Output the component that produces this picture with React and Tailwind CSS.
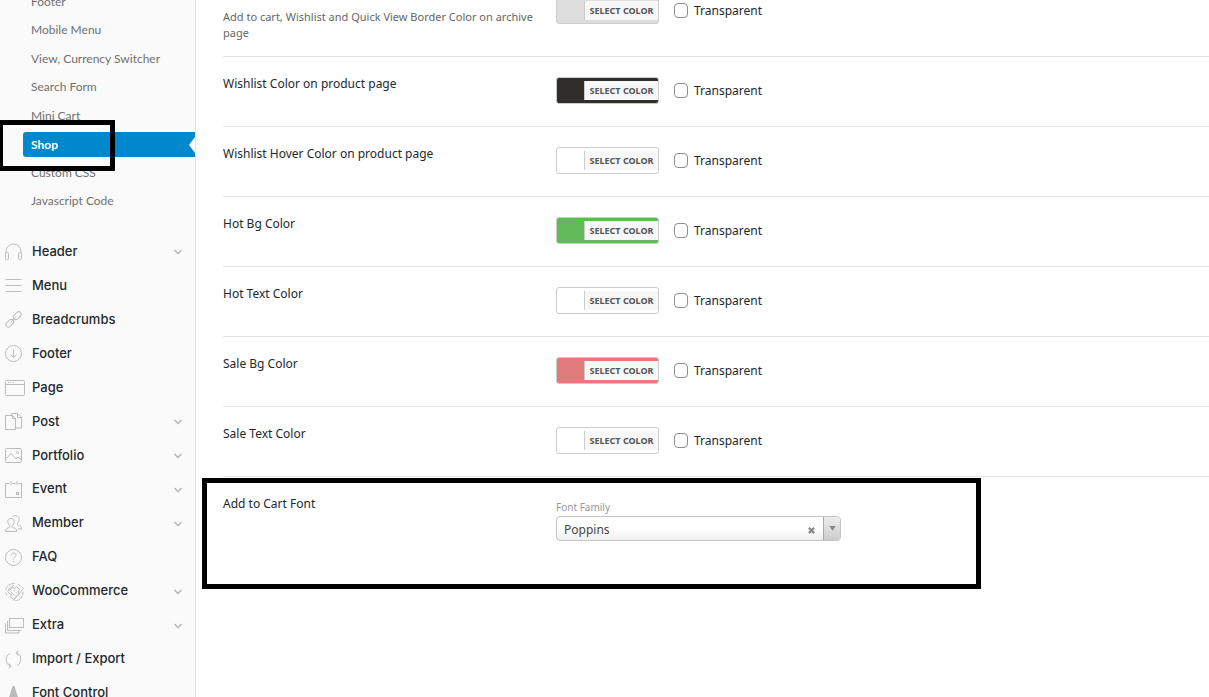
import React, { useState } from 'react';

const subItems = [
    'Footer',
    'Mobile Menu',
    'View, Currency Switcher',
    'Search Form',
    'Mini Cart',
    'Shop',
    'Custom CSS',
    'Javascript Code',
];

const icons = {
    header: (
        <>
            <path d="M1 10.500V8.500a7.500 7.500 0 0 1 15 0v2" />
            <rect x="0.500" y="9.500" width="3" height="7" rx="1" />
            <rect x="13.500" y="9.500" width="3" height="7" rx="1" />
        </>
    ),
    menu: <path d="M0.500 2.500h16M0.500 8.500h16M0.500 14.500h16" strokeWidth="1.200" />,
    breadcrumbs: (
        <>
            <rect x="-4.500" y="-2.500" width="9" height="5" rx="2.500" transform="translate(12.300 4.700) rotate(-45)" />
            <rect x="-4.500" y="-2.500" width="9" height="5" rx="2.500" transform="translate(4.700 12.300) rotate(-45)" />
            <path d="M5.500 11.500l6-6" />
        </>
    ),
    footer: (
        <>
            <circle cx="8.500" cy="8.500" r="8" />
            <path d="M8.500 4.500v8M5.500 9.500l3 3 3-3" />
        </>
    ),
    page: (
        <>
            <rect x="0.500" y="1.500" width="19" height="15" rx="1" />
            <path d="M0.500 5.500h19M3 3.500h1M5.500 3.500h1M8 3.500h1" />
        </>
    ),
    post: (
        <>
            <path d="M7.500 2.500h-7v14h10v-11zM7.500 2.500v3h3" />
            <path d="M6.500 2.500v-2h6l4 3.500v11h-6M12.500 0.500v4h4" />
        </>
    ),
    portfolio: (
        <>
            <rect x="0.500" y="1.500" width="16" height="14" rx="1" />
            <path d="M0.500 12.500l5.500-6 5 5.500 2-2 3.500 3" />
            <circle cx="12.500" cy="5.500" r="1" />
        </>
    ),
    event: (
        <>
            <path d="M4.500 2.500h-4v14h16v-14h-3M7.500 2.500h3M6 0v4M12 0v4" />
            <rect x="11.500" y="11.500" width="2" height="2" />
        </>
    ),
    member: (
        <>
            <path d="M0.500 16.500c0-3 1.500-3 4-4 .8-.4.800-1.300 0-2C3 9 2.500 7 3 5c.4-2 5.600-2 6 0 .5 2 0 4-1.500 5.500-.7.800-.7 1.600.2 2 2.600 1 4 1.200 4 4z" />
            <path d="M7 2c1-2 6.500-2 7 1.200.3 2-.2 3.600-1.400 5-.6.700-.6 1.400.2 1.800 2.400.9 3.700 1.200 3.700 4h-3.500" />
        </>
    ),
    faq: (
        <>
            <circle cx="8.500" cy="8.500" r="8" />
            <path d="M6 6.500c0-3.500 5-3.300 5-.3 0 2-2.500 2-2.500 4.300M8.500 12v1.200" />
        </>
    ),
    woo: (
        <>
            <path d="M2.500 8.500l5-4 2 1.500 2-2.500 3 3-1.500 2.500 1.500 2-6 5.500-3-3 1-2-2-1z" />
            <path d="M0.500 7.500C1.500 3 5 0.500 9.500 0.500M0.500 9.500l1.500 3M17 4l1.500 1.500L8 17.500M12.500 1l3 2M18 9c0 5-3.500 8.500-8 9M3 7l6-5" />
            <path d="M5.500 8.500l5 5M8.500 7l4 4" strokeDasharray="2 1" />
        </>
    ),
    extra: (
        <>
            <rect x="4.500" y="1.500" width="14" height="9" />
            <path d="M2.500 4v9.500h14M0.500 6.500v9.500h13.500v-2" />
        </>
    ),
    transfer: (
        <>
            <path d="M6 15.500C-.5 13 0 4.500 5 2.500M11.500 1.500c6 2.500 5.500 11 .5 13" />
            <path d="M3.500 17l2.500-1.500-2-3M13.500 0l-2.500 1.500 2 3" />
        </>
    ),
    font: <path d="M7.500 1h2l5 16h-3.500l-2.500-2.500-3 2.500h-3z" fill="#bbb" stroke="none" />,
};

const menuItems = [
    { label: 'Header', icon: 'header', open: true },
    { label: 'Menu', icon: 'menu' },
    { label: 'Breadcrumbs', icon: 'breadcrumbs' },
    { label: 'Footer', icon: 'footer' },
    { label: 'Page', icon: 'page' },
    { label: 'Post', icon: 'post', open: true },
    { label: 'Portfolio', icon: 'portfolio', open: true },
    { label: 'Event', icon: 'event', open: true },
    { label: 'Member', icon: 'member', open: true },
    { label: 'FAQ', icon: 'faq' },
    { label: 'WooCommerce', icon: 'woo', open: true },
    { label: 'Extra', icon: 'extra', open: true },
    { label: 'Import / Export', icon: 'transfer' },
    { label: 'Font Control', icon: 'font' },
];

const colorFields = [
    { id: 'border', note: 'Add to cart, Wishlist and Quick View Border Color on archive page', color: '#dddddd' },
    { id: 'wishlist', label: 'Wishlist Color on product page', color: '#302e2a' },
    { id: 'wishlist-hover', label: 'Wishlist Hover Color on product page', color: '#ffffff' },
    { id: 'hot-bg', label: 'Hot Bg Color', color: '#62b959' },
    { id: 'hot-text', label: 'Hot Text Color', color: '#ffffff' },
    { id: 'sale-bg', label: 'Sale Bg Color', color: '#e27c7c' },
    { id: 'sale-text', label: 'Sale Text Color', color: '#ffffff' },
];

function Sidebar() {
    return (
        <aside className="relative w-[196px] shrink-0 border-r border-[#e2e2e2] bg-[#fafafa]">
            <ul className="-mt-3 grid h-[228px] auto-rows-fr pl-[23px] font-['Lato',sans-serif] text-[12px] leading-4 text-[#707070]">
                {subItems.map((item) => (
                    <li key={item} className="flex items-center">
                        {item === 'Shop' ? (
                            <a href="#shop" className="flex h-[25px] flex-1 items-center justify-between rounded-l-[3px] bg-[#0088cc] pl-2 font-bold text-white">
                                {item}
                                <svg width="6" height="16" viewBox="0 0 6 16" fill="#fff">
                                    <path d="M6 0v16L0 8z" />
                                </svg>
                            </a>
                        ) : (
                            <a href="#section" className="pb-px pl-2">{item}</a>
                        )}
                    </li>
                ))}
            </ul>

            <ul className="mt-[18px] grid h-[475px] auto-rows-fr font-['Inter',sans-serif] text-[13px] leading-4 font-medium text-[#23282d]">
                {menuItems.map((item) => (
                    <li key={item.label}>
                        <a href="#section" className="flex h-full items-center pl-[5px] pr-[13px]">
                            <span className="w-[27px] pt-[3px]">
                                <svg className="block" width="20" height="18" viewBox="0 0 20 18" fill="none" stroke="#bbb" strokeWidth="1">
                                    {icons[item.icon]}
                                </svg>
                            </span>
                            <span className="flex-1">{item.label}</span>
                            {item.open && (
                                <svg className="mt-[3px]" width="8" height="6" viewBox="0 0 8 6" fill="none" stroke="#b5b5b5" strokeWidth="1.500">
                                    <path d="M0.500 1L4 4.500 7.500 1" />
                                </svg>
                            )}
                        </a>
                    </li>
                ))}
            </ul>

            {/* Highlight on the Shop section */}
            <div className="pointer-events-none absolute left-0 top-[120px] h-[51px] w-[115px] border-5 border-l-3 border-black" />
        </aside>
    );
}

function ColorField({ id, label, note, color }) {
    const [transparent, setTransparent] = useState(false);

    return (
        <div className="flex min-h-[70px] items-start border-b border-[#e4e4e4] pt-5 pb-[15px]">
            <div className="w-[333px] shrink-0 leading-[14px]">
                {label}
                {note && <p className="mt-3 pr-4 text-[11px] leading-4 text-[#666]">{note}</p>}
            </div>
            <button
                type="button"
                className="flex h-[27px] w-[103px] items-center rounded-[3px] border border-[#ccc]"
                style={{ backgroundColor: color }}
            >
                <span className="ml-[27px] flex h-[19px] flex-1 items-center justify-center border-l border-[#ccc] bg-[#f7f7f7] text-[9px] font-bold text-[#555]">
                    SELECT COLOR
                </span>
            </button>
            <label htmlFor={id} className="ml-[15px] flex h-[27px] items-center gap-[6px]">
                <input
                    id={id}
                    type="checkbox"
                    checked={transparent}
                    onChange={(e) => setTransparent(e.target.checked)}
                    className="h-[15px] w-[14px] appearance-none rounded-[4px] border border-[#8c8f94] bg-white checked:bg-[#0088cc]"
                />
                Transparent
            </label>
        </div>
    );
}

function FontField() {
    const [family, setFamily] = useState('Poppins');

    return (
        <div className="relative flex items-start pt-5">
            <div className="w-[333px] shrink-0 leading-[14px]">Add to Cart Font</div>
            <div className="w-[285px]">
                <label htmlFor="family" className="block pb-[2px] pt-[3px] text-[10px] leading-[14px] text-[#999]">Font Family</label>
                <div className="flex h-[25px] items-stretch overflow-hidden rounded-[4px] border border-[#c4c4c4] bg-linear-to-b from-white from-50% to-[#eee]">
                    <select
                        id="family"
                        value={family}
                        onChange={(e) => setFamily(e.target.value)}
                        className="min-w-0 flex-1 appearance-none pl-[7px] pt-[2px] text-[12px] text-[#444] outline-none"
                    >
                        <option value="">Default</option>
                        <option>Poppins</option>
                    </select>
                    <button type="button" aria-label="Clear" onClick={() => setFamily('')} className="flex w-[23px] items-center justify-center pt-1">
                        <svg width="7" height="7" viewBox="0 0 8 8" stroke="#888" strokeWidth="2.500">
                            <path d="M1 1l6 6M7 1L1 7" />
                        </svg>
                    </button>
                    <span className="flex w-[17px] items-center justify-center border-l border-[#aaa] bg-linear-to-b from-[#eee] to-[#ccc]">
                        <svg width="7" height="5" viewBox="0 0 7 5" fill="#888">
                            <path d="M0.500 0h6L3.500 5z" />
                        </svg>
                    </span>
                </div>
            </div>

            {/* Highlight on the font option */}
            <div className="pointer-events-none absolute -left-[21px] top-px h-[111px] w-[779px] border-5 border-black" />
        </div>
    );
}

function App() {
    return (
        <div className="flex h-screen overflow-hidden bg-white">
            <Sidebar />
            <main className="-mt-[23px] min-w-0 flex-1 pl-[27px] font-['Noto_Sans',sans-serif] text-[12px] text-[#23282d]">
                {colorFields.map((field) => (
                    <ColorField key={field.id} {...field} />
                ))}
                <FontField />
            </main>
        </div>
    );
}

export default App;
